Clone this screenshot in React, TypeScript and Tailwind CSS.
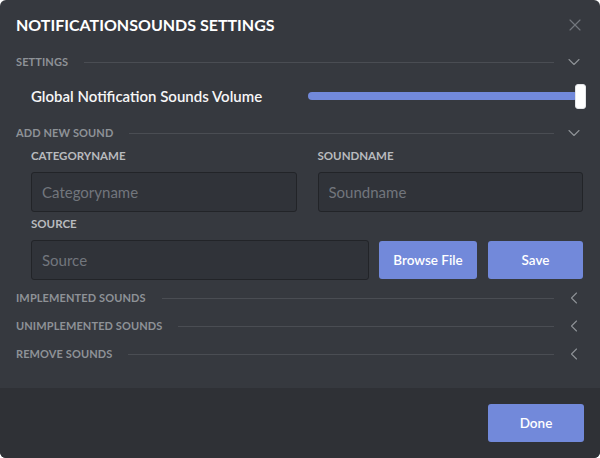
import { X, ChevronDown, ChevronLeft } from "lucide-react";

const SectionHeader = ({ title, open }: { title: string; open?: boolean }) => (
  <div className="flex items-center h-[28px]">
    <span className="text-[11px] font-bold uppercase text-[#8e9297] tracking-[0.01em]">{title}</span>
    <div className="flex-1 h-[1px] bg-[#4a4d53] ml-[16px]" />
    <div className="w-[20px] ml-[10px] flex justify-center text-[#8e9297]">
      {open ? <ChevronDown size={22} strokeWidth={1.3} /> : <ChevronLeft size={22} strokeWidth={1.3} />}
    </div>
  </div>
);

const Label = ({ children }: { children: string }) => (
  <div className="text-[11.5px] font-bold uppercase text-[#b9bbbe] h-[16px] leading-[16px]">{children}</div>
);

const Input = ({ placeholder }: { placeholder: string }) => (
  <input
    placeholder={placeholder}
    className="h-[40px] w-full rounded-[3px] border border-[#222428] bg-[#303339] px-[10px] text-[15px] text-[#dcddde] placeholder:text-[#72767d] outline-none"
  />
);

const App = () => {
  return (
    <div className="w-[600px] h-[458px] bg-white" style={{ fontFamily: "Lato, 'Noto Sans', sans-serif" }}>
      <div className="w-full h-full rounded-[6px] overflow-hidden bg-[#36393f] flex flex-col">
        <div className="flex-1 px-[16px]">
          <div className="flex items-center justify-between h-[48px] pt-[2px]">
            <h1 className="text-[16px] font-bold uppercase text-white">NotificationSounds Settings</h1>
            <X size={20} strokeWidth={1.4} className="text-[#72767d] -mr-[1px]" />
          </div>
          <SectionHeader title="Settings" open />
          <div className="flex items-center h-[40px] mb-[3px] pl-[15px]">
            <span className="text-[15px] font-semibold text-[#f6f6f7] w-[277px]">Global Notification Sounds Volume</span>
            <div className="flex-1 flex items-center -mr-[2px]">
              <div className="flex-1 h-[8px] rounded-full bg-[#7289da]" />
              <div className="w-[11px] h-[25px] rounded-[3px] bg-white -ml-[3px] border border-[#e3e5e8]" />
            </div>
          </div>
          <SectionHeader title="Add New Sound" open />
          <div className="pl-[15px] pr-[1px]">
            <div className="grid grid-cols-2 gap-x-[21px] pt-[1px]">
              <div>
                <Label>Categoryname</Label>
                <div className="mt-[8px]"><Input placeholder="Categoryname" /></div>
              </div>
              <div>
                <Label>Soundname</Label>
                <div className="mt-[8px]"><Input placeholder="Soundname" /></div>
              </div>
            </div>
            <div className="mt-[4px]">
              <Label>Source</Label>
              <div className="mt-[8px] flex items-center">
                <div className="w-[338px]"><Input placeholder="Source" /></div>
                <button className="ml-[10px] w-[98px] h-[38px] rounded-[3px] bg-[#7289da] text-white text-[13.5px] font-semibold">Browse File</button>
                <button className="ml-[11px] flex-1 h-[38px] rounded-[3px] bg-[#7289da] text-white text-[13.5px] font-semibold">Save</button>
              </div>
            </div>
          </div>
          <div className="mt-[4px]">
            <SectionHeader title="Implemented Sounds" />
            <SectionHeader title="Unimplemented Sounds" />
            <SectionHeader title="Remove Sounds" />
          </div>
        </div>
        <div className="h-[70px] bg-[#2f3136] flex items-center justify-end px-[16px]">
          <button className="w-[96px] h-[38px] rounded-[3px] bg-[#7289da] text-white text-[13.5px] font-semibold">Done</button>
        </div>
      </div>
    </div>
  );
};

export default App;
